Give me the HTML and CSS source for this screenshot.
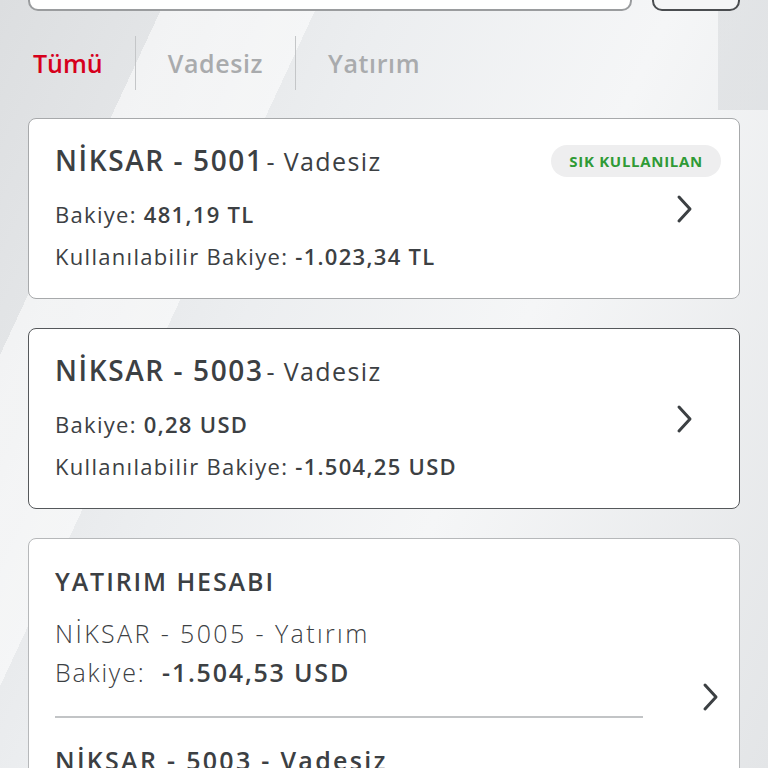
FILE: index.html
```html
<!DOCTYPE html>
<html lang="tr">
<head>
    <meta charset="UTF-8">
    <meta name="viewport" content="width=device-width, initial-scale=1.0">
    <title>Hesaplarım</title>
    <link rel="stylesheet" href="styles.css">
</head>
<body>
    <div class="screen">
        <div class="top-bar">
            <div class="search-box"></div>
            <div class="filter-btn"></div>
        </div>

        <div class="tabs">
            <span class="tab active">Tümü</span>
            <span class="tab-sep"></span>
            <span class="tab">Vadesiz</span>
            <span class="tab-sep"></span>
            <span class="tab">Yatırım</span>
        </div>

        <div class="account-card">
            <div class="card-body">
                <div class="card-title"><b>NİKSAR - 5001</b><span class="type"> - Vadesiz</span></div>
                <div class="card-line">Bakiye: <b>481,19 TL</b></div>
                <div class="card-line">Kullanılabilir Bakiye: <b>-1.023,34 TL</b></div>
            </div>
            <span class="badge">SIK KULLANILAN</span>
            <svg class="chevron" width="20" height="30" viewBox="0 0 20 30"><path d="M4 3 L15 15 L4 27" fill="none" stroke="#3c4043" stroke-width="3" stroke-linecap="round" stroke-linejoin="round"/></svg>
        </div>

        <div class="account-card selected">
            <div class="card-body">
                <div class="card-title"><b>NİKSAR - 5003</b><span class="type"> - Vadesiz</span></div>
                <div class="card-line">Bakiye: <b>0,28 USD</b></div>
                <div class="card-line">Kullanılabilir Bakiye: <b>-1.504,25 USD</b></div>
            </div>
            <svg class="chevron" width="20" height="30" viewBox="0 0 20 30"><path d="M4 3 L15 15 L4 27" fill="none" stroke="#3c4043" stroke-width="3" stroke-linecap="round" stroke-linejoin="round"/></svg>
        </div>

        <div class="group-card">
            <div class="group-title">YATIRIM HESABI</div>
            <div class="group-row">
                <div class="group-info">
                    <div class="group-name">NİKSAR - 5005 - Yatırım</div>
                    <div class="group-balance">Bakiye: &nbsp;<b>-1.504,53 USD</b></div>
                </div>
                <svg class="chevron" width="20" height="30" viewBox="0 0 20 30"><path d="M4 3 L15 15 L4 27" fill="none" stroke="#3c4043" stroke-width="3" stroke-linecap="round" stroke-linejoin="round"/></svg>
            </div>
            <div class="group-divider"></div>
            <div class="group-next"><b>NİKSAR - 5003 - Vadesiz</b></div>
        </div>
    </div>
</body>
</html>
```

FILE: styles.css
```css
body {
    margin: 0;
    font-family: "Open Sans", Arial, sans-serif;
    color: #3c4043;
    overflow: hidden;
}
.screen {
    height: 768px;
    padding: 0 28px;
    background-color: #e6e8ea;
    background-image:
        linear-gradient(180deg, rgba(210,213,216,0.5) 0 110px, transparent 110px),
        linear-gradient(115deg, transparent 0 150px, rgba(255,255,255,0.55) 150px 290px, transparent 290px),
        linear-gradient(115deg, #dcdee0 0%, #eceef0 35%, #f5f6f7 60%, #e3e5e7 100%);
    background-size: 50px 100%, auto, auto;
    background-position: right top, 0 0, 0 0;
    background-repeat: no-repeat;
    overflow: hidden;
}
.top-bar {
    display: flex;
    gap: 20px;
    height: 9px;
}
.search-box {
    flex: 1;
    margin-top: -20px;
    height: 27px;
    background: #fff;
    border: 2px solid #9a9c9e;
    border-radius: 10px;
}
.filter-btn {
    width: 84px;
    margin-top: -20px;
    height: 27px;
    background: #f4f5f6;
    border: 2px solid #4a4d50;
    border-radius: 10px;
}
.tabs {
    display: flex;
    align-items: center;
    height: 54px;
    margin: 27px 0 28px 5px;
}
.tab {
    font-size: 25px;
    font-weight: 600;
    color: #a9abad;
    letter-spacing: 0.6px;
    line-height: 50px;
}
.tab.active {
    color: #d6001c;
    letter-spacing: 0;
}
.tab-sep {
    width: 1px;
    height: 54px;
    background: #c4c6c8;
    margin: 0 32px;
}
.account-card {
    position: relative;
    display: flex;
    align-items: center;
    height: 181px;
    box-sizing: border-box;
    background: #fff;
    border: 1px solid #a7a9ab;
    border-radius: 8px;
    padding: 0 44px 0 26px;
    margin-bottom: 29px;
}
.account-card.selected {
    border-color: #55585b;
    border-width: 1.5px;
}
.card-body {
    flex: 1;
    padding-top: 2px;
}
.card-title {
    font-size: 28px;
    line-height: 36px;
    margin-bottom: 14px;
}
.card-title b {
    font-weight: 600;
    letter-spacing: 1.6px;
}
.card-title .type {
    font-size: 25px;
    font-weight: 400;
    letter-spacing: 1.4px;
    margin-left: -5px;
}
.card-line {
    font-size: 22px;
    line-height: 42px;
    letter-spacing: 1.3px;
}
.card-line b {
    font-weight: 600;
}
.badge {
    position: absolute;
    top: 26px;
    right: 18px;
    background: #eeeeef;
    color: #2f9a36;
    font-size: 15px;
    font-weight: 700;
    letter-spacing: 0.7px;
    padding: 6px 18px;
    border-radius: 18px;
}
.chevron {
    flex: none;
}
.group-card {
    background: #fff;
    border: 1px solid #b6b8ba;
    border-radius: 8px;
    padding: 22px 26px 0;
    height: 260px;
}
.group-title {
    font-size: 25px;
    font-weight: 600;
    line-height: 40px;
    letter-spacing: 1.9px;
    margin-bottom: 13px;
}
.group-row {
    display: flex;
    align-items: flex-end;
}
.group-info {
    flex: 1;
}
.group-name {
    font-size: 25px;
    font-weight: 300;
    line-height: 38px;
    letter-spacing: 2.4px;
}
.group-balance {
    font-size: 25px;
    font-weight: 300;
    line-height: 40px;
    letter-spacing: 1.8px;
}
.group-balance b {
    font-weight: 600;
}
.group-row .chevron {
    margin: 0 -8px 0 0;
    transform: translateY(20px);
}
.group-divider {
    height: 2px;
    background: #c2c4c6;
    width: 588px;
    margin: 24px 0 22px;
}
.group-next {
    font-size: 25px;
    line-height: 40px;
    letter-spacing: 2.3px;
}
.group-next b {
    font-weight: 600;
}
```
